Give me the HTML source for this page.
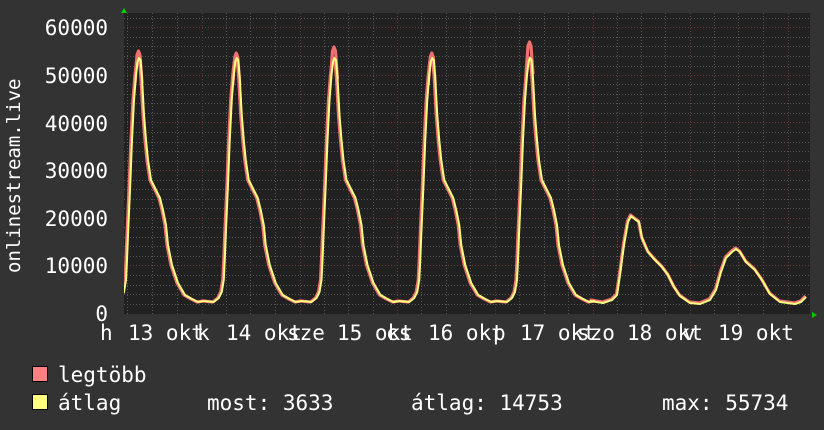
<!DOCTYPE html>
<html><head><meta charset="utf-8"><style>
html,body{margin:0;padding:0;background:#333;}
body{width:824px;height:430px;overflow:hidden;position:relative;font-family:"DejaVu Sans Mono","Liberation Mono",monospace;color:#fff;}
</style></head><body>
<svg width="824" height="430" xmlns="http://www.w3.org/2000/svg" style="position:absolute;left:0;top:0">
<defs>
<clipPath id="pc"><rect x="124" y="13" width="686" height="301"/></clipPath>
<path id="day" d="M-18,301 L-8,302 L-3,298 L0,292 L2,280 L3,260 L4,235 L6,190 L8,140 L10,100 L12,75 L13.5,62 L15,58 L16.5,60 L18,78 L20,115 L22,140 L24,160 L27,180 L32,190 L36,198 L39,210 L42,225 L44,245 L48,265 L54,283 L61,295 L68,299 L74,302 L80,301"/>
<path id="pk" d="M11,80 L13,52 L14.5,48 L16,52 L18,80"/>
<path id="d6" d="M590,301 L603,303 L612,300 L617,295 L620,275 L624,245 L628,222 L631,216 L636,220 L639,222 L642,238 L648,252 L655,260 L662,267 L668,275 L674,287 L680,296 L690,303 L700,304 L710,300 L716,290 L721,272 L726,258 L732,252 L736,249 L740,252 L746,262 L755,270 L762,280 L770,294 L780,302 L795,304 L801,302 L806,297"/>
</defs>
<rect x="124" y="13" width="686" height="301" fill="#212121"/>
<g stroke="#555" stroke-width="1" stroke-dasharray="1,2" fill="none">
<path d="M124,304.5H810M124,294.5H810M124,285.5H810M124,275.5H810M124,256.5H810M124,246.5H810M124,237.5H810M124,227.5H810M124,208.5H810M124,199.5H810M124,189.5H810M124,180.5H810M124,161.5H810M124,151.5H810M124,142.5H810M124,132.5H810M124,113.5H810M124,103.5H810M124,94.5H810M124,84.5H810M124,66.5H810M124,56.5H810M124,46.5H810M124,37.5H810M124,18.5H810"/>
<path d="M127.5,13V314M152.5,13V314M177.5,13V314M226.5,13V314M250.5,13V314M275.5,13V314M324.5,13V314M348.5,13V314M373.5,13V314M421.5,13V314M446.5,13V314M470.5,13V314M519.5,13V314M544.5,13V314M568.5,13V314M617.5,13V314M641.5,13V314M665.5,13V314M714.5,13V314M738.5,13V314M763.5,13V314"/>
</g>
<g stroke="#6a3a3a" stroke-width="1" stroke-dasharray="1,2" fill="none">
<path d="M124,265.5H810M124,218.5H810M124,170.5H810M124,122.5H810M124,75.5H810M124,27.5H810"/>
<path d="M202.5,13V314M300.5,13V314M397.5,13V314M495.5,13V314M593.5,13V314M690.5,13V314M788.5,13V314"/>
</g>
<g clip-path="url(#pc)" fill="none" stroke-linejoin="round">
<g stroke="#f07070" stroke-width="3.2">
<use href="#day" transform="translate(123,0)"/>
<use href="#day" transform="translate(220.75,0)"/>
<use href="#day" transform="translate(318.5,0)"/>
<use href="#day" transform="translate(416.25,0)"/>
<use href="#day" transform="translate(514,0)"/>
<use href="#pk" transform="translate(124,3)"/>
<use href="#pk" transform="translate(221.75,5)"/>
<use href="#pk" transform="translate(319.5,-1)"/>
<use href="#pk" transform="translate(417.25,5)"/>
<use href="#pk" transform="translate(515,-6)"/>
<use href="#d6" transform="translate(-0.5,-1)"/>
</g>
<g stroke="#ffff80" stroke-width="2">
<use href="#day" transform="translate(124,0)"/>
<use href="#day" transform="translate(221.75,0)"/>
<use href="#day" transform="translate(319.5,0)"/>
<use href="#day" transform="translate(417.25,0)"/>
<use href="#day" transform="translate(515,0)"/>
<use href="#d6"/>
</g>
</g>
<path d="M121,13L124,8L127,13Z" fill="#0c0"/>
<path d="M812,312L817,315L812,318Z" fill="#0c0"/>
<g font-family="DejaVu Sans Mono, Liberation Mono, monospace" font-size="21" fill="#fff">
<g text-anchor="end">
<text x="108" y="35">60000</text>
<text x="108" y="83">50000</text>
<text x="108" y="131">40000</text>
<text x="108" y="178">30000</text>
<text x="108" y="226">20000</text>
<text x="108" y="273">10000</text>
<text x="108" y="321">0</text>
</g>
<text transform="translate(20,273) rotate(-90)" font-size="19">onlinestream.live</text>
<text x="100" y="340">h</text>
<text x="128" y="340">13 okt</text>
<text x="197" y="340">k</text>
<text x="226" y="340">14 okt</text>
<text x="287" y="340">sze</text>
<text x="337" y="340">15 okt</text>
<text x="386" y="340">cs</text>
<text x="428" y="340">16 okt</text>
<text x="493" y="340">p</text>
<text x="520" y="340">17 okt</text>
<text x="577" y="340">szo</text>
<text x="627" y="340">18 okt</text>
<text x="683" y="340">v</text>
<text x="718" y="340">19 okt</text>
<rect x="32.5" y="366.5" width="15" height="15" fill="#ff8080" stroke="#000"/>
<rect x="32.5" y="394.5" width="15" height="15" fill="#ffff80" stroke="#000"/>
<text x="58" y="382">legtöbb</text>
<text x="58" y="410">átlag</text>
<text x="207" y="410">most: 3633</text>
<text x="411" y="410">átlag: 14753</text>
<text x="662" y="410">max: 55734</text>
</g>
</svg>
</body></html>
